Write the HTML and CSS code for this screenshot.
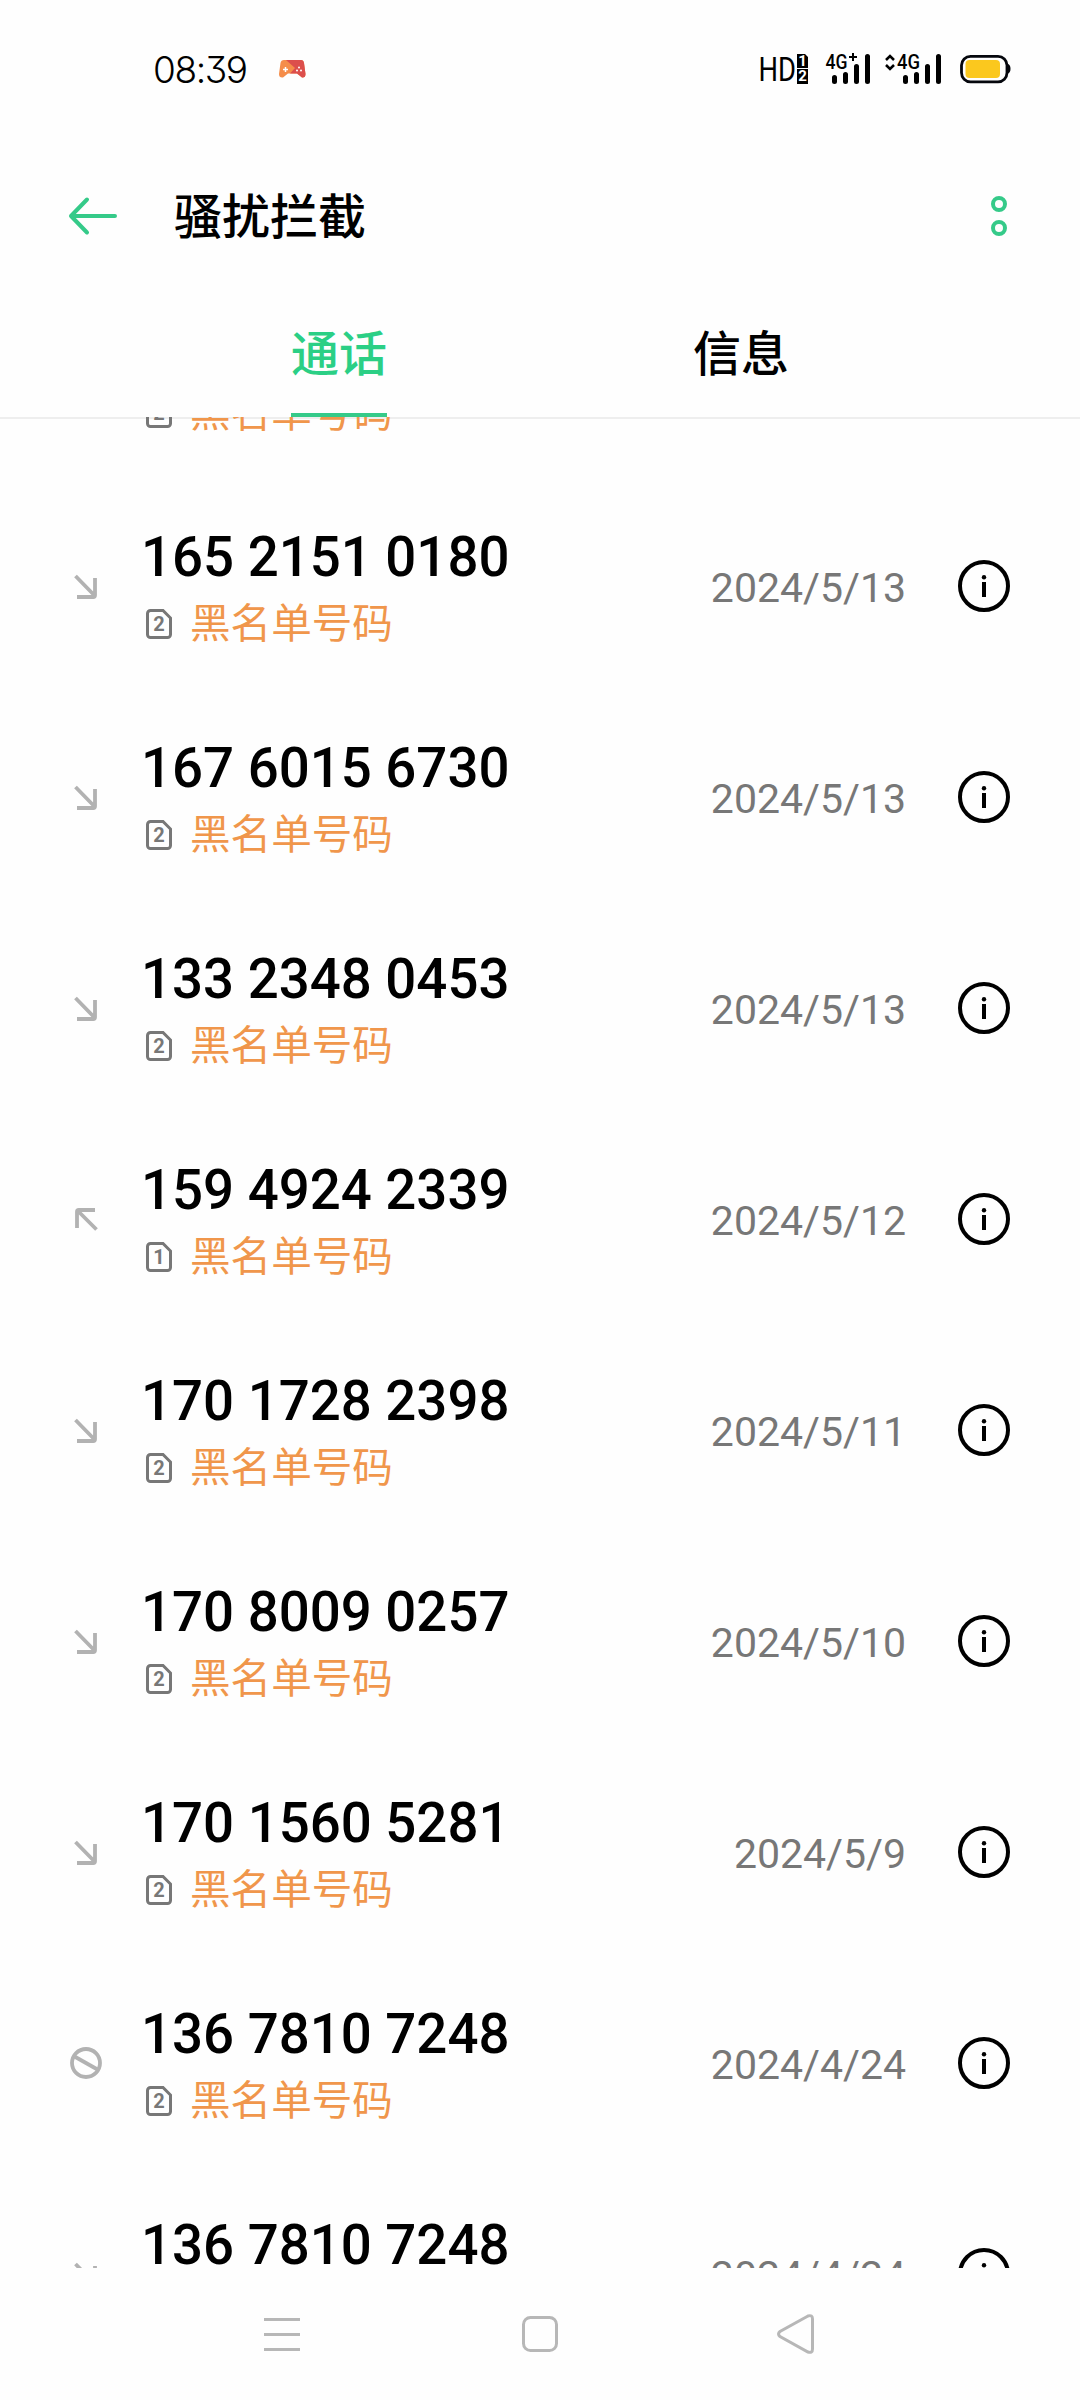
FILE: index.html
```html
<!DOCTYPE html>
<html lang="zh-CN">
<head>
  <meta charset="UTF-8" />
  <title>骚扰拦截</title>
  <meta name="viewport" content="width=device-width, initial-scale=1" />
  <link rel="stylesheet" href="styles.css">
</head>
<body>
  <!-- Shared icons -->
  <svg class="sprite" aria-hidden="true">
    <symbol id="incoming" viewBox="0 0 32 32">
      <path d="M5.500 6 25.500 26.500M25 8v17.200q0 1.800-1.800 1.800H7" fill="none" stroke="#b2b2b2" stroke-width="3.800" />
    </symbol>
    <symbol id="outgoing" viewBox="0 0 32 32">
      <path d="M26.500 26.500 7 7M7 25V8.800Q7 7 8.800 7H25" fill="none" stroke="#b2b2b2" stroke-width="3.800" />
    </symbol>
    <symbol id="blocked" viewBox="0 0 32 32">
      <circle cx="16" cy="16" r="14" fill="none" stroke="#b2b2b2" stroke-width="3.800" />
      <path d="M4.500 9.500 27.500 22.500" stroke="#b2b2b2" stroke-width="3.800" />
    </symbol>
    <symbol id="sim" viewBox="0 0 26 30">
      <path d="M4.500 1.500H17L24.500 9V25.500a3 3 0 0 1-3 3h-17a3 3 0 0 1-3-3v-21a3 3 0 0 1 3-3z" fill="none" stroke="#777" stroke-width="3" />
    </symbol>
    <symbol id="info" viewBox="0 0 52 52">
      <circle cx="26" cy="26" r="24" fill="none" stroke="#000" stroke-width="4" />
      <circle cx="26" cy="17.200" r="2.200" />
      <path d="M26 22v15" stroke="#000" stroke-width="4" />
    </symbol>
  </svg>

  <header class="status-bar">
    <span class="clock">08:39</span>
    <svg class="game" viewBox="0 0 28 20" width="28" height="20">
      <path d="M6 1h17q2.500 0 3 3l1.500 11q0 4-3.500 3.500L19 14.500h-9L5 18.500Q1 19 1 15L2.500 4Q3 1 6 1z" fill="#f58d4a" />
      <path d="M8 1h15q2.500 0 3 3l1.500 11q0 4-3.500 3.500L19 14.500h-7L17 9z" fill="#dc4f4c" />
      <path d="M7.500 8v5M5 10.500h5" stroke="#fff" stroke-width="1.500" />
      <circle cx="21" cy="8.500" r="1" fill="#fff" /><circle cx="19" cy="11.500" r="1" fill="#fff" /><circle cx="23" cy="11.500" r="1" fill="#fff" />
    </svg>
    <div class="status-icons">
      <svg class="hd" width="49" height="32" viewBox="0 0 49 32">
        <text class="hd-text" x="-1.500" y="28" textLength="37.500" lengthAdjust="spacingAndGlyphs">HD</text>
        <path d="M37 1h8l3 3v11H37zM37 16h11v15H37z" />
        <text class="hd-num" x="42.500" y="12.800" text-anchor="middle">1</text>
        <text class="hd-num" x="42.500" y="28" text-anchor="middle">2</text>
      </svg>
      <svg class="signal" width="46" height="32" viewBox="0 0 46 32">
        <text class="net" x="0.500" y="15.500" textLength="22" lengthAdjust="spacingAndGlyphs">4G</text>
        <path d="M28 0v8M24 4h8" stroke="#000" stroke-width="2" />
        <path d="M9.500 24.500v4M20.500 21.500v7M31.500 13.500v15M42.500 3.500v25" class="bars" />
      </svg>
      <svg class="signal two" width="57" height="32" viewBox="0 0 57 32">
        <path d="m1 7 4-4 4 4M1 12l4 4 4-4" fill="none" stroke="#000" stroke-width="2.500" />
        <text class="net" x="12" y="15.500" textLength="23" lengthAdjust="spacingAndGlyphs">4G</text>
        <path d="M20.500 24.500v4M31.500 21.500v7M42.500 13.500v15M53.500 3.500v25" class="bars" />
      </svg>
      <svg class="battery" width="51" height="32" viewBox="0 0 51 32">
        <rect x="1.500" y="3.300" width="45.500" height="25.500" rx="9" fill="none" stroke="#05070d" stroke-width="2.800" />
        <path d="M47 10.500q3.500 1 3.500 5.300T47 21z" fill="#05070d" />
        <rect x="5.500" y="7" width="34.500" height="18" rx="4" fill="#fbc81e" />
      </svg>
    </div>
  </header>

  <div class="title-bar">
    <svg class="back" width="50" height="38" viewBox="0 0 50 38">
      <path d="M20 2.500 4 19l16 16.500M4 19h44" fill="none" stroke="#35ca89" stroke-width="4" stroke-linecap="round" stroke-linejoin="round" />
    </svg>
    <h1>骚扰拦截</h1>
    <svg class="more" width="16" height="40" viewBox="0 0 16 40">
      <circle cx="8" cy="8" r="6" fill="none" stroke="#35ca89" stroke-width="4" />
      <circle cx="8" cy="32" r="6" fill="none" stroke="#35ca89" stroke-width="4" />
    </svg>
  </div>

  <nav class="tabs">
    <a class="tab active"><span>通话</span></a>
    <a class="tab"><span>信息</span></a>
  </nav>

  <main class="call-list">
    <div class="call">
      <svg class="type"><use href="#incoming" /></svg>
      <div class="who">
        <div class="number">165 2151 0180</div>
        <div class="tag"><span class="sim"><svg><use href="#sim" /></svg><b>2</b></span>黑名单号码</div>
      </div>
      <span class="date">2024/5/13</span>
      <svg class="info"><use href="#info" /></svg>
    </div>
    <div class="call">
      <svg class="type"><use href="#incoming" /></svg>
      <div class="who">
        <div class="number">165 2151 0180</div>
        <div class="tag"><span class="sim"><svg><use href="#sim" /></svg><b>2</b></span>黑名单号码</div>
      </div>
      <span class="date">2024/5/13</span>
      <svg class="info"><use href="#info" /></svg>
    </div>
    <div class="call">
      <svg class="type"><use href="#incoming" /></svg>
      <div class="who">
        <div class="number">167 6015 6730</div>
        <div class="tag"><span class="sim"><svg><use href="#sim" /></svg><b>2</b></span>黑名单号码</div>
      </div>
      <span class="date">2024/5/13</span>
      <svg class="info"><use href="#info" /></svg>
    </div>
    <div class="call">
      <svg class="type"><use href="#incoming" /></svg>
      <div class="who">
        <div class="number">133 2348 0453</div>
        <div class="tag"><span class="sim"><svg><use href="#sim" /></svg><b>2</b></span>黑名单号码</div>
      </div>
      <span class="date">2024/5/13</span>
      <svg class="info"><use href="#info" /></svg>
    </div>
    <div class="call">
      <svg class="type"><use href="#outgoing" /></svg>
      <div class="who">
        <div class="number">159 4924 2339</div>
        <div class="tag"><span class="sim"><svg><use href="#sim" /></svg><b>1</b></span>黑名单号码</div>
      </div>
      <span class="date">2024/5/12</span>
      <svg class="info"><use href="#info" /></svg>
    </div>
    <div class="call">
      <svg class="type"><use href="#incoming" /></svg>
      <div class="who">
        <div class="number">170 1728 2398</div>
        <div class="tag"><span class="sim"><svg><use href="#sim" /></svg><b>2</b></span>黑名单号码</div>
      </div>
      <span class="date">2024/5/11</span>
      <svg class="info"><use href="#info" /></svg>
    </div>
    <div class="call">
      <svg class="type"><use href="#incoming" /></svg>
      <div class="who">
        <div class="number">170 8009 0257</div>
        <div class="tag"><span class="sim"><svg><use href="#sim" /></svg><b>2</b></span>黑名单号码</div>
      </div>
      <span class="date">2024/5/10</span>
      <svg class="info"><use href="#info" /></svg>
    </div>
    <div class="call">
      <svg class="type"><use href="#incoming" /></svg>
      <div class="who">
        <div class="number">170 1560 5281</div>
        <div class="tag"><span class="sim"><svg><use href="#sim" /></svg><b>2</b></span>黑名单号码</div>
      </div>
      <span class="date">2024/5/9</span>
      <svg class="info"><use href="#info" /></svg>
    </div>
    <div class="call">
      <svg class="type"><use href="#blocked" /></svg>
      <div class="who">
        <div class="number">136 7810 7248</div>
        <div class="tag"><span class="sim"><svg><use href="#sim" /></svg><b>2</b></span>黑名单号码</div>
      </div>
      <span class="date">2024/4/24</span>
      <svg class="info"><use href="#info" /></svg>
    </div>
    <div class="call">
      <svg class="type"><use href="#incoming" /></svg>
      <div class="who">
        <div class="number">136 7810 7248</div>
        <div class="tag"><span class="sim"><svg><use href="#sim" /></svg><b>2</b></span>黑名单号码</div>
      </div>
      <span class="date">2024/4/24</span>
      <svg class="info"><use href="#info" /></svg>
    </div>
  </main>

  <footer class="nav-bar">
    <svg width="36" height="40" viewBox="0 0 36 40">
      <path d="M0 5.500h36M0 20.500h36M0 35.500h36" />
    </svg>
    <svg width="36" height="40" viewBox="0 0 36 40">
      <rect x="2.500" y="3.500" width="33" height="33" rx="7" />
    </svg>
    <svg width="38" height="40" viewBox="0 0 38 40">
      <path d="M31 2 3 17.500q-3 2.500 0 5L31 38q4.500 1.500 4.500-3V5q0-4.500-4.500-3z" />
    </svg>
  </footer>
</body>
</html>
```
FILE: styles.css
```css
:root {
  --green: #35ca89;
  --orange: #f0964b;
  --grey: #777;
  --light-grey: #b7b7b7;
}
*, *::before, *::after {
  box-sizing: border-box;
}
body {
  margin: 0;
  width: 1080px;
  height: 2400px;
  display: flex;
  flex-direction: column;
  background: #fefefe;
  color: #000;
  font-family: Roboto, "Noto Sans CJK SC", sans-serif;
  overflow: hidden;
}
svg {
  display: block;
  flex: none;
  overflow: visible;
}
.sprite {
  position: absolute;
  width: 0;
  height: 0;
}

/* Status bar */
.status-bar {
  height: 138px;
  display: flex;
  align-items: center;
  padding: 0 69px 0 153px;
}
.clock {
  width: 125px;
  font-family: Inter, sans-serif;
  font-size: 37px;
  font-weight: 300;
  letter-spacing: -1.4px;
  font-feature-settings: "cv09";
}
.status-icons {
  display: flex;
  margin-left: auto;
}
.signal {
  margin-left: 16px;
}
.signal.two {
  margin-left: 14px;
}
.battery {
  margin-left: 18px;
}
.hd-text {
  font-size: 34px;
}
.hd-num {
  font-size: 15px;
  font-weight: 700;
  fill: #fff;
}
.net {
  font-size: 20px;
  font-weight: 500;
}
.bars {
  stroke: #000;
  stroke-width: 5;
  stroke-linecap: round;
}

/* Title */
.title-bar {
  height: 156px;
  display: flex;
  align-items: center;
  padding: 0 73px 0 67px;
}
h1 {
  margin: 0 auto 0 57px;
  padding-top: 4px;
  font-size: 48px;
  font-weight: 500;
  line-height: 60px;
}

/* Tabs */
.tabs {
  height: 123px;
  display: flex;
  padding: 0 138px;
}
.tab {
  flex: 1;
  display: flex;
  justify-content: center;
  font-size: 48px;
  font-weight: 500;
}
.tab span {
  padding-top: 2px;
  line-height: 117px;
  border-bottom: 4px solid transparent;
}
.tab.active span {
  color: #2bcf85;
  border-color: var(--green);
}

/* Blocked calls */
.call-list {
  height: 1851px;
  overflow: hidden;
  box-shadow: inset 0 2px #eee;
}
.call {
  height: 211px;
  display: flex;
  align-items: center;
  padding: 0 70px;
}
.call:first-child {
  margin-top: -148px;
}
.type {
  width: 32px;
  height: 32px;
}
.who {
  margin: 0 auto 0 39px;
  padding-top: 9px;
}
.number {
  font-size: 54.6px;
  font-weight: 500;
  line-height: 68px;
}
.tag {
  display: flex;
  align-items: center;
  padding-left: 5px;
  font-size: 40.6px;
  line-height: 67px;
  color: var(--orange);
}
.sim {
  display: grid;
  place-items: center;
  margin-right: 18px;
  line-height: 30px;
}
.sim svg, .sim b {
  grid-area: 1 / 1;
}
.sim svg {
  width: 26px;
  height: 30px;
}
.sim b {
  font-size: 20px;
  color: var(--grey);
}
.date {
  padding-top: 4px;
  font-size: 41px;
  color: var(--grey);
}
.info {
  width: 52px;
  height: 52px;
  margin-left: 52px;
}

/* System navigation */
.nav-bar {
  height: 132px;
  display: flex;
  align-items: center;
  justify-content: space-between;
  padding: 0 265px 0 264px;
}
.nav-bar svg {
  fill: none;
  stroke: var(--light-grey);
  stroke-width: 3;
}
```
